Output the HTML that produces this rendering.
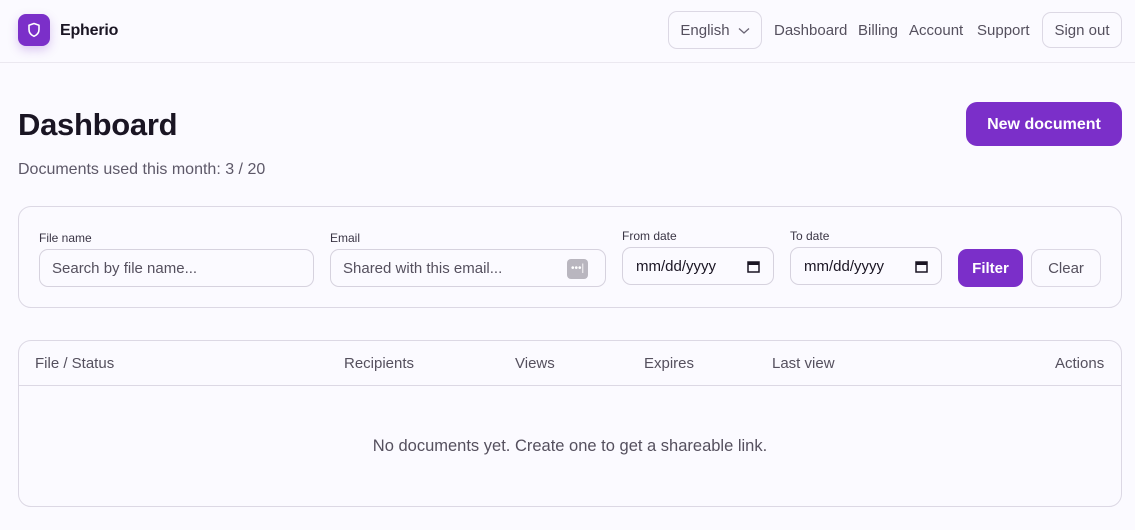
<!DOCTYPE html>
<html><head><style>
*{box-sizing:border-box;margin:0;padding:0}
body{width:1135px;height:530px;background:#fbfaff;font-family:"Liberation Sans",sans-serif;color:#1a1523;position:relative;overflow:hidden}
.abs{position:absolute}
.hdr{left:0;top:0;width:1135px;height:63px;border-bottom:1px solid #ebe8f0}
.logo{left:18px;top:14px;width:32px;height:32px;border-radius:8px;background:#7b2fc9;box-shadow:0 4px 10px rgba(123,47,201,.25)}
.brand{left:60px;top:22px;font-size:16px;font-weight:bold;letter-spacing:-.2px;line-height:18px}
.btn{border:1px solid #dcd8e4;border-radius:9px;background:#fbfaff;color:#55505e;font-size:15px;display:flex;align-items:center;justify-content:center}
.nav{top:22px;font-size:15px;color:#55505e}
h1{position:absolute;left:18px;top:107px;font-size:31px;font-weight:bold;letter-spacing:-.3px}
.sub{left:18px;top:161px;font-size:16px;color:#5d5868}
.newb{left:966px;top:102px;width:156px;height:44px;border-radius:11px;background:#7b2fc9;color:#fff;font-size:16px;font-weight:bold;display:flex;align-items:center;justify-content:center;padding-top:2px}
.card{border:1px solid #dcd8e4;border-radius:13px;background:#fbfaff}
.lbl{font-size:12px;color:#3a3545}
.inp{border:1px solid #d6d2de;border-radius:9px;height:38px;font-size:15px;color:#55505e;display:flex;align-items:center;padding-left:12px;background:#fbfaff;padding-top:1px}
.th{top:355px;font-size:15px;color:#55505e}
</style></head><body>
<div class="abs hdr"></div>
<div class="abs logo"><svg width="32" height="32" viewBox="0 0 32 32"><path d="M16 9.5l5 1.8v4.2c0 3.3-2.2 5.6-5 6.8-2.8-1.2-5-3.5-5-6.8v-4.2z" fill="none" stroke="#fff" stroke-width="1.6" stroke-linejoin="round"/></svg></div>
<div class="abs brand">Epherio</div>
<div class="abs btn" style="left:668px;top:11px;width:94px;height:38px;padding-top:1px">English <svg width="12" height="8" style="margin-left:8px" viewBox="0 0 12 8"><path d="M1 1.5l5 4.5 5-4.5" fill="none" stroke="#6a6574" stroke-width="1.3"/></svg></div>
<div class="abs nav" style="left:774px">Dashboard</div>
<div class="abs nav" style="left:858px">Billing</div>
<div class="abs nav" style="left:909px">Account</div>
<div class="abs nav" style="left:977px">Support</div>
<div class="abs btn" style="left:1042px;top:12px;width:80px;height:36px;padding-top:1px">Sign out</div>
<h1>Dashboard</h1>
<div class="abs sub">Documents used this month: 3 / 20</div>
<div class="abs newb">New document</div>
<div class="abs card" style="left:18px;top:206px;width:1104px;height:102px"></div>
<div class="abs lbl" style="left:39px;top:231px">File name</div>
<div class="abs inp" style="left:39px;top:249px;width:275px">Search by file name...</div>
<div class="abs lbl" style="left:330px;top:231px">Email</div>
<div class="abs inp" style="left:330px;top:249px;width:276px">Shared with this email...<span style="position:absolute;right:17px;top:9px;width:21px;height:20px;border-radius:4px;background:#b9b6bf;color:#fff;font-size:10px;text-align:center;line-height:20px">•••|</span></div>
<div class="abs lbl" style="left:622px;top:229px">From date</div>
<div class="abs inp" style="left:622px;top:247px;width:152px;color:#1a1523;padding-left:13px">mm/dd/yyyy<svg class="abs" style="left:124px;top:12px" width="13" height="13" viewBox="0 0 13 13"><rect x="1" y="2" width="11" height="10" fill="none" stroke="#1a1523" stroke-width="1.5"/><rect x="1" y="2" width="11" height="3" fill="#1a1523"/></svg></div>
<div class="abs lbl" style="left:790px;top:229px">To date</div>
<div class="abs inp" style="left:790px;top:247px;width:152px;color:#1a1523;padding-left:13px">mm/dd/yyyy<svg class="abs" style="left:124px;top:12px" width="13" height="13" viewBox="0 0 13 13"><rect x="1" y="2" width="11" height="10" fill="none" stroke="#1a1523" stroke-width="1.5"/><rect x="1" y="2" width="11" height="3" fill="#1a1523"/></svg></div>
<div class="abs" style="left:958px;top:249px;width:65px;height:38px;border-radius:9px;background:#7b2fc9;color:#fff;font-size:15px;font-weight:bold;display:flex;align-items:center;justify-content:center">Filter</div>
<div class="abs btn" style="left:1031px;top:249px;width:70px;height:38px">Clear</div>
<div class="abs card" style="left:18px;top:340px;width:1104px;height:167px"></div>
<div class="abs" style="left:19px;top:385px;width:1102px;border-top:1px solid #dcd8e4"></div>
<div class="abs th" style="left:35px">File / Status</div>
<div class="abs th" style="left:344px">Recipients</div>
<div class="abs th" style="left:515px">Views</div>
<div class="abs th" style="left:644px">Expires</div>
<div class="abs th" style="left:772px">Last view</div>
<div class="abs th" style="left:1055px">Actions</div>
<div class="abs" style="left:18px;width:1104px;top:437px;text-align:center;font-size:16.5px;color:#55505e">No documents yet. Create one to get a shareable link.</div>
</body></html>
